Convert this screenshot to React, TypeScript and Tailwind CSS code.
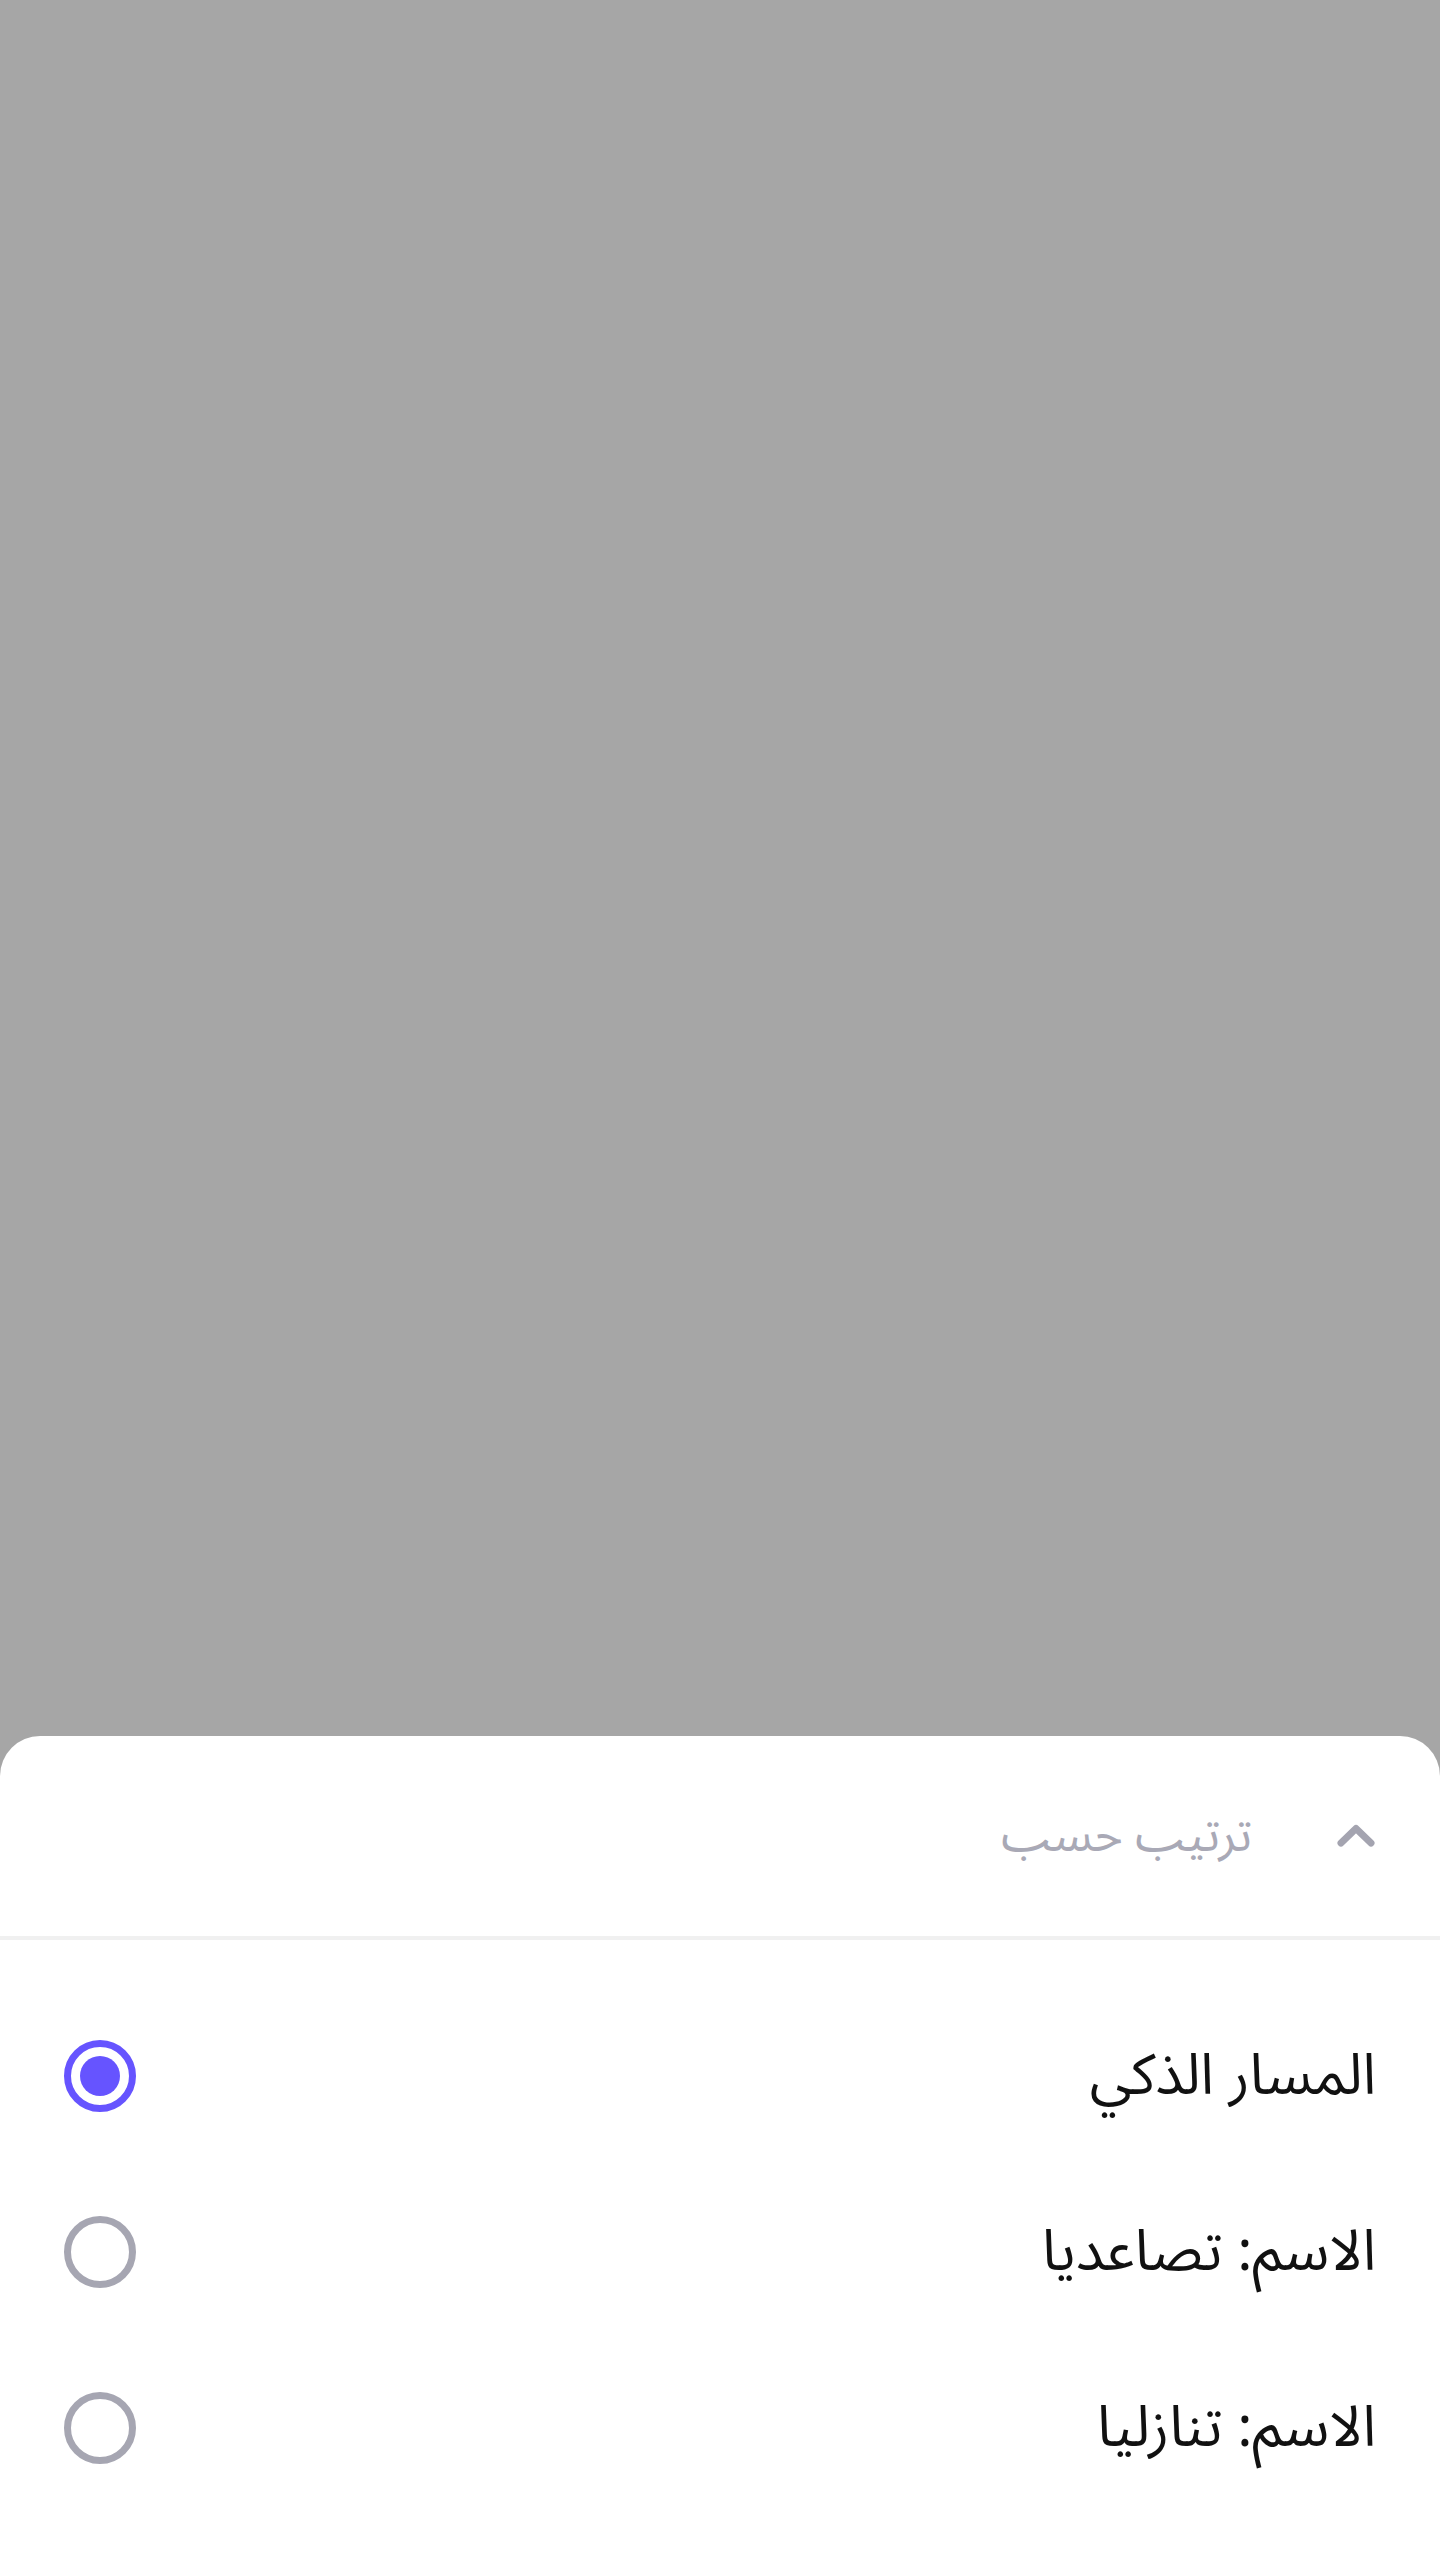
import { useState } from 'react';

const options = ['المسار الذكي', 'الاسم: تصاعديا', 'الاسم: تنازليا'];

const Radio = ({ checked }: { checked: boolean }) => (
  <span
    className={`flex h-[72px] w-[72px] items-center justify-center rounded-full border-[7px] ${
      checked ? 'border-[#6654ff]' : 'border-[#a6a6b2]'
    }`}
  >
    {checked && <span className="h-10 w-10 rounded-full bg-[#6654ff]" />}
  </span>
);

export default function App() {
  const [selected, setSelected] = useState(0);

  return (
    <div
      className="flex h-[2560px] w-[1440px] flex-col bg-[#a6a6a6]"
      style={{ fontFamily: '"Noto Sans Arabic", "Noto Sans", sans-serif' }}
    >
      <div className="flex-1" />
      <div dir="rtl" className="h-[824px] rounded-t-[40px] bg-white">
        <div className="flex h-[200px] items-center pr-[64px]">
          <svg width="40" height="24" viewBox="0 0 40 24" className="shrink-0">
            <path
              d="M5 19 L20 4.5 L35 19"
              fill="none"
              stroke="#a4a4b0"
              strokeWidth="7"
              strokeLinecap="round"
              strokeLinejoin="round"
            />
          </svg>
          <span className="mr-[84px] text-[48px] leading-none text-[#a9a9b6]">ترتيب حسب</span>
        </div>
        <div className="h-1 bg-[#f0f0f0]" />
        <div className="pt-12">
          {options.map((label, i) => (
            <button
              key={label}
              onClick={() => setSelected(i)}
              className="flex h-[176px] w-full items-center justify-between pr-[64px] pl-16"
            >
              <span className="text-[57px] leading-none text-[#111]">{label}</span>
              <Radio checked={selected === i} />
            </button>
          ))}
        </div>
      </div>
    </div>
  );
}
